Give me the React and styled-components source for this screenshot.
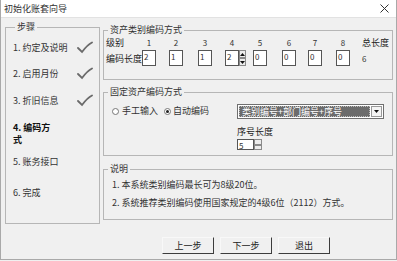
import React from 'react';
import styled, { createGlobalStyle } from 'styled-components';

const GlobalStyle = createGlobalStyle`
  * { box-sizing: border-box; }
  body {
    margin: 0;
    background: #f0f0f0;
    font-family: "Noto Sans CJK SC", "Noto Sans", sans-serif;
    color: #222;
  }
`;

const Window = styled.div`
  width: 397px;
  height: 260px;
  border: 1px solid #a9a9a9;
  border-top: none;
  background: #f0f0f0;
  display: flex;
  flex-direction: column;
  overflow: hidden;
  font-size: 9px;
  line-height: 12px;
`;

const TitleBar = styled.div`
  height: 18px;
  background: #fff;
  display: flex;
  align-items: center;
  justify-content: space-between;
  padding: 0 7px 0 3px;
  border-bottom: 1px solid #e2e2e2;
  color: #333;
`;

const Body = styled.div`
  display: flex;
  padding: 4px 0 0 4px;
`;

const Group = styled.fieldset`
  margin: 0;
  margin-top: ${p => p.$mt || 0}px;
  width: ${p => p.$w}px;
  height: ${p => p.$h}px;
  border: 1px solid #b6b6b6;
  padding: ${p => p.$pad || '0 0 0 2px'};
  min-width: 0;
`;

const Legend = styled.legend`
  padding: 0 2px;
  margin-left: 2px;
  font-size: 9px;
  line-height: 10px;
  color: #333;
`;

const StepList = styled.div`
  display: flex;
  flex-direction: column;
`;

const Step = styled.div`
  display: flex;
  align-items: flex-start;
  height: ${p => p.$h}px;
  font-weight: ${p => (p.$current ? 'bold' : 'normal')};
  color: ${p => (p.$current ? '#111' : '#333')};
`;

const StepCheck = styled.svg`
  margin-left: auto;
  margin-top: -1px;
`;

const RightColumn = styled.div`
  display: flex;
  flex-direction: column;
  margin: 3px 0 0 3px;
`;

const LevelGrid = styled.div`
  display: grid;
  grid-template-columns: 36px 27px 29px 27px 28px 29px 26px 28px 26px auto;
  grid-template-rows: 11px 16px;
  row-gap: 2px;
  padding-top: 2px;
  line-height: 11px;
  align-items: center;
`;

const HeadNum = styled.div`
  width: 14px;
  text-align: center;
  font-size: 8px;
  color: #333;
`;

const CodeBox = styled.div`
  width: ${p => p.$w || 14}px;
  height: ${p => p.$h || 16}px;
  background: #fff;
  border: 1px solid #555;
  font-size: 8px;
  line-height: 9px;
  padding: 1px 0 0 1px;
  color: #333;
`;

const SpinWrap = styled.div`
  display: flex;
  align-items: center;
`;

const Spinner = styled.div`
  display: flex;
  flex-direction: column;
  width: ${p => p.$w || 7}px;
  height: ${p => p.$h || 16}px;
`;

const SpinHalf = styled.div`
  flex: 1;
  border: 1px solid #8a8a8a;
  background: #ececec;
  display: flex;
  align-items: center;
  justify-content: center;
`;

const Total = styled.div`
  font-size: 8px;
  color: #333;
`;

const CodeGrid = styled.div`
  display: grid;
  grid-template-columns: 131px auto;
  padding-top: 7px;
`;

const RadioRow = styled.div`
  display: flex;
  align-items: center;
  height: 14px;
  padding-left: 6px;
`;

const Radio = styled.span`
  width: 7px;
  height: 7px;
  border: 1px solid #777;
  border-radius: 50%;
  background: #fff;
  display: flex;
  align-items: center;
  justify-content: center;
  margin-left: ${p => p.$ml || 0}px;
  &::after {
    content: '';
    width: 3px;
    height: 3px;
    border-radius: 50%;
    background: ${p => (p.$checked ? '#222' : 'transparent')};
  }
`;

const RadioText = styled.span`
  margin-left: ${p => p.$ml || 3}px;
  color: #333;
`;

const Select = styled.div`
  width: 147px;
  height: 15px;
  border: 1px solid #6f6f6f;
  background: #fff;
  display: flex;
  padding: 1px;
`;

const Selected = styled.div`
  flex: 1;
  background: #6c6c6c;
  color: #fff;
  outline: 1px dotted #bbb;
  outline-offset: -1px;
  padding-left: 3px;
  line-height: 11px;
  font-size: 9px;
`;

const SelectArrow = styled.div`
  width: 11px;
  margin-left: 1px;
  border: 1px solid #999;
  background: #f4f4f4;
  display: flex;
  align-items: center;
  justify-content: center;
`;

const SeqBlock = styled.div`
  grid-column: 2;
  margin-top: 7px;
  display: flex;
  flex-direction: column;
  gap: 1px;
`;

const NoteList = styled.div`
  display: flex;
  flex-direction: column;
  gap: 6px;
  padding: 5px 0 0 6px;
  color: #333;
`;

const Footer = styled.div`
  display: flex;
  gap: 6px;
  margin-top: 13px;
  padding-left: 161px;
`;

const Button = styled.button`
  width: 52px;
  height: 17px;
  padding: 0;
  background: #f0f0f0;
  border: 1px solid;
  border-color: #f8f8f8 #3c3c3c #3c3c3c #f8f8f8;
  font-family: inherit;
  font-size: 9px;
  line-height: 12px;
  color: #222;
`;

const Check = () => (
  <StepCheck width="17" height="13" viewBox="0 0 17 13">
    <path d="M2 7 L6 11 C9 7 12 3.5 16 1.5" fill="none" stroke="#6a6a6a" strokeWidth="1.8" strokeLinecap="round" />
  </StepCheck>
);

const steps = [
  { label: '1. 约定及说明', h: 26, done: true },
  { label: '2. 启用月份', h: 27, done: true },
  { label: '3. 折旧信息', h: 27, done: true },
  { label: <>4. 编码方<br />式</>, h: 34, current: true },
  { label: '5. 账务接口', h: 31 },
  { label: '6. 完成', h: 12 },
];

const levels = [
  { n: 1, v: '2' },
  { n: 2, v: '1' },
  { n: 3, v: '1' },
  { n: 4, v: '2', spin: true },
  { n: 5, v: '0' },
  { n: 6, v: '0' },
  { n: 7, v: '0' },
  { n: 8, v: '0' },
];

const Arrow = ({ up }) => (
  <svg width="5" height="3" viewBox="0 0 5 3">
    <path d={up ? 'M0 3 L2.5 0 L5 3 Z' : 'M0 0 L5 0 L2.5 3 Z'} fill="#111" />
  </svg>
);

export default function App() {
  return (
    <>
      <GlobalStyle />
      <Window>
        <TitleBar>
          <span>初始化账套向导</span>
          <svg width="9" height="9" viewBox="0 0 9 9">
            <path d="M0.5 0.5 L8.5 8.5 M8.5 0.5 L0.5 8.5" stroke="#333" strokeWidth="1" />
          </svg>
        </TitleBar>
        <Body>
          <Group $w={95} $h={202} $pad="10px 6px 0 7px">
            <Legend>步骤</Legend>
            <StepList>
              {steps.map((s, i) => (
                <Step key={i} $h={s.h} $current={s.current}>
                  <span>{s.label}</span>
                  {s.done && <Check />}
                </Step>
              ))}
            </StepList>
          </Group>
          <RightColumn>
            <Group $w={290} $h={55}>
              <Legend>资产类别编码方式</Legend>
              <LevelGrid>
                <span>级别</span>
                {levels.map(l => (
                  <HeadNum key={l.n}>{l.n}</HeadNum>
                ))}
                <span>总长度</span>
                <span>编码长度</span>
                {levels.map(l =>
                  l.spin ? (
                    <SpinWrap key={l.n}>
                      <CodeBox>{l.v}</CodeBox>
                      <Spinner>
                        <SpinHalf><Arrow up /></SpinHalf>
                        <SpinHalf><Arrow /></SpinHalf>
                      </Spinner>
                    </SpinWrap>
                  ) : (
                    <CodeBox key={l.n}>{l.v}</CodeBox>
                  )
                )}
                <Total>6</Total>
              </LevelGrid>
            </Group>
            <Group $w={290} $h={69} $mt={7}>
              <Legend>固定资产编码方式</Legend>
              <CodeGrid>
                <RadioRow>
                  <Radio />
                  <RadioText>手工输入</RadioText>
                  <Radio $ml={6} $checked />
                  <RadioText $ml={2}>自动编码</RadioText>
                </RadioRow>
                <Select>
                  <Selected>类别编号+部门编号+序号</Selected>
                  <SelectArrow><Arrow /></SelectArrow>
                </Select>
                <SeqBlock>
                  <span>序号长度</span>
                  <SpinWrap>
                    <CodeBox $w={17} $h={11}>5</CodeBox>
                    <Spinner $w={8} $h={11}>
                      <SpinHalf />
                      <SpinHalf />
                    </Spinner>
                  </SpinWrap>
                </SeqBlock>
              </CodeGrid>
            </Group>
            <Group $w={290} $h={56} $mt={8}>
              <Legend>说明</Legend>
              <NoteList>
                <span>1. 本系统类别编码最长可为8级20位。</span>
                <span>2. 系统推荐类别编码使用国家规定的4级6位（2112）方式。</span>
              </NoteList>
            </Group>
          </RightColumn>
        </Body>
        <Footer>
          <Button>上一步</Button>
          <Button>下一步</Button>
          <Button>退出</Button>
        </Footer>
      </Window>
    </>
  );
}
